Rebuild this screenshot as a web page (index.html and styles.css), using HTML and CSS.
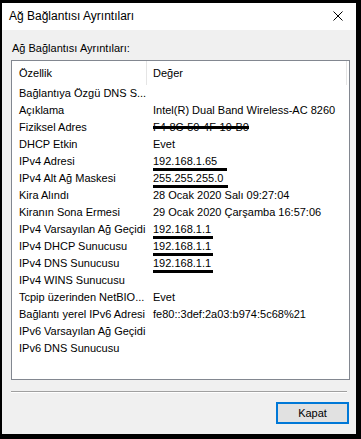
FILE: index.html
```html
<!DOCTYPE html>
<html lang="tr">
<head>
  <meta charset="UTF-8">
  <title>Ağ Bağlantısı Ayrıntıları</title>
  <link rel="stylesheet" href="styles.css">
</head>
<body>
  <div class="window">
    <!-- Başlık çubuğu -->
    <div class="titlebar">
      <span class="title">Ağ Bağlantısı Ayrıntıları</span>
      <svg class="close" width="10" height="10" viewBox="0 0 10 10">
        <path d="M0.5 0.5 L9.5 9.5 M9.5 0.5 L0.5 9.5" stroke="#000" stroke-width="1" fill="none"/>
      </svg>
    </div>

    <div class="content">
      <div class="group-label">Ağ Bağlantısı Ayrıntıları:</div>

      <div class="listview">
        <div class="header">
          <div class="col-name">Özellik</div>
          <div class="col-value">Değer</div>
        </div>
        <div class="row"><div class="col-name">Bağlantıya Özgü DNS S...</div><div class="col-value"></div></div>
        <div class="row"><div class="col-name">Açıklama</div><div class="col-value">Intel(R) Dual Band Wireless-AC 8260</div></div>
        <div class="row"><div class="col-name">Fiziksel Adres</div><div class="col-value"><span class="strike">F4-8C-50-4F-19-B0</span></div></div>
        <div class="row"><div class="col-name">DHCP Etkin</div><div class="col-value">Evet</div></div>
        <div class="row"><div class="col-name">IPv4 Adresi</div><div class="col-value"><span class="mark mark-long">192.168.1.65</span></div></div>
        <div class="row"><div class="col-name">IPv4 Alt Ağ Maskesi</div><div class="col-value"><span class="mark mark-mask">255.255.255.0</span></div></div>
        <div class="row"><div class="col-name">Kira Alındı</div><div class="col-value">28 Ocak 2020 Salı 09:27:04</div></div>
        <div class="row"><div class="col-name">Kiranın Sona Ermesi</div><div class="col-value">29 Ocak 2020 Çarşamba 16:57:06</div></div>
        <div class="row"><div class="col-name">IPv4 Varsayılan Ağ Geçidi</div><div class="col-value"><span class="mark">192.168.1.1</span></div></div>
        <div class="row"><div class="col-name">IPv4 DHCP Sunucusu</div><div class="col-value"><span class="mark">192.168.1.1</span></div></div>
        <div class="row"><div class="col-name">IPv4 DNS Sunucusu</div><div class="col-value"><span class="mark">192.168.1.1</span></div></div>
        <div class="row"><div class="col-name">IPv4 WINS Sunucusu</div><div class="col-value"></div></div>
        <div class="row"><div class="col-name">Tcpip üzerinden NetBIO...</div><div class="col-value">Evet</div></div>
        <div class="row"><div class="col-name">Bağlantı yerel IPv6 Adresi</div><div class="col-value">fe80::3def:2a03:b974:5c68%21</div></div>
        <div class="row"><div class="col-name">IPv6 Varsayılan Ağ Geçidi</div><div class="col-value"></div></div>
        <div class="row"><div class="col-name">IPv6 DNS Sunucusu</div><div class="col-value"></div></div>
      </div>

      <div class="separator"></div>

      <div class="footer">
        <button class="btn">Kapat</button>
      </div>
    </div>
  </div>
</body>
</html>
```

FILE: styles.css
```css
* {
  margin: 0;
  padding: 0;
  box-sizing: border-box;
}

body {
  background: #000;
  font-family: 'Liberation Sans', Arial, sans-serif;
  font-size: 11px;
  color: #000;
}

.window {
  margin: 3px 5px 0 2px;
  width: 354px;
  height: 431px;
  background: #f0f0f0;
  display: flex;
  flex-direction: column;
}

.titlebar {
  height: 27px;
  background: #fff;
  display: flex;
  align-items: center;
  justify-content: space-between;
  padding: 0 13px 1px 7px;
}

.title {
  font-size: 12px;
}

.close {
  display: block;
}

.content {
  padding: 11px 6px 0 9px;
  display: flex;
  flex-direction: column;
}

.group-label {
  height: 19px;
  line-height: 14px;
  padding-left: 1px;
}

.listview {
  width: 339px;
  height: 320px;
  background: #fff;
  border: 1px solid #828790;
}

.header,
.row {
  display: grid;
  grid-template-columns: 135px 200px;
}

.header {
  height: 24px;
  align-items: center;
}

.header .col-name,
.header .col-value {
  border-right: 1px solid #e5e5e5;
  height: 24px;
  line-height: 24px;
}

.row {
  height: 17px;
  line-height: 17px;
}

.col-name {
  padding-left: 7px;
  white-space: nowrap;
  overflow: hidden;
}

.col-value {
  padding-left: 6px;
  white-space: nowrap;
}

/* elle çizilmiş işaretler */
.mark {
  display: inline-block;
  line-height: 14px;
  border-bottom: 3px solid #000;
  padding-right: 2px;
}

.mark-long {
  padding-right: 10px;
}

.mark-mask {
  padding-right: 5px;
}

.strike {
  text-decoration: line-through;
  text-decoration-thickness: 3px;
}

.separator {
  margin-top: 11px;
  width: 336px;
  height: 2px;
  border-top: 1px solid #a0a0a0;
  border-bottom: 1px solid #fff;
}

.footer {
  display: flex;
  justify-content: flex-end;
  padding: 9px 1px 0 0;
}

.btn {
  width: 73px;
  height: 22px;
  background: #e1e1e1;
  border: 2px solid #0078d7;
  font-family: inherit;
  font-size: 11px;
  color: #000;
}
```
